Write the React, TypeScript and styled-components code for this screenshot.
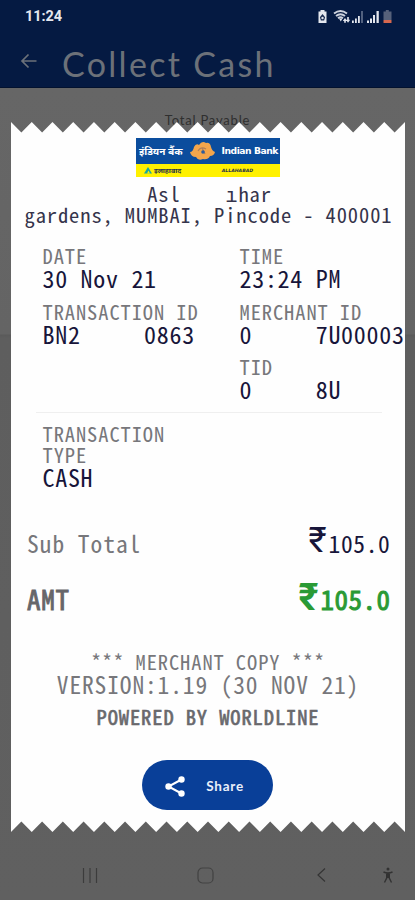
import React from "react";
import styled, { createGlobalStyle } from "styled-components";

const Global = createGlobalStyle`
  *{box-sizing:border-box}
  html,body{margin:0;padding:0;background:#606060}
  body{width:415px;height:900px;overflow:hidden}
`;

const mono = `"Noto Sans Mono CJK SC","Liberation Mono",monospace`;

const TEETH = 19;
const PAPER_W = 394;
const PAPER_H = 710;
const zigzag = (() => {
  const step = PAPER_W / TEETH;
  const pts: string[] = [];
  for (let i = 0; i <= TEETH; i++) {
    pts.push(`${(i * step).toFixed(2)}px 0px`);
    if (i < TEETH) pts.push(`${((i + 0.5) * step).toFixed(2)}px 10.5px`);
  }
  for (let i = TEETH; i >= 0; i--) {
    pts.push(`${(i * step).toFixed(2)}px ${PAPER_H}px`);
    if (i > 0) pts.push(`${((i - 0.5) * step).toFixed(2)}px ${PAPER_H - 10.5}px`);
  }
  return `polygon(${pts.join(",")})`;
})();

const Screen = styled.div`
  position: relative;
  width: 415px;
  height: 900px;
  overflow: hidden;
  display: flex;
  flex-direction: column;
  background: linear-gradient(#666 88px, #646464 334px, #5a5a5a 335px, #5e5e5e 338px, #606060 900px);
`;
const Header = styled.header`
  height: 88px;
  background: #051a42;
  border-bottom: 1px solid #03122f;
`;
const StatusBar = styled.div`
  height: 34px;
  padding: 0 22px 0 25px;
  display: flex;
  align-items: center;
  justify-content: space-between;
`;
const Clock = styled.span`
  font: 700 14.5px/16px Roboto, sans-serif;
  letter-spacing: -0.1px;
  color: #e4e7ee;
`;
const TitleBar = styled.div`
  height: 54px;
  padding: 3px 0 0 20px;
  display: flex;
  align-items: flex-start;
`;
const BackIcon = styled.svg`
  margin-top: 15px;
  margin-right: 24px;
`;
const Title = styled.h1`
  margin: 0;
  font: 400 34px/53px Lato, sans-serif;
  letter-spacing: 2.3px;
  color: #6c7179;
  white-space: nowrap;
`;
const Payable = styled.div`
  padding-top: 23px;
  text-align: center;
  font: 400 13px/18px Lato, sans-serif;
  letter-spacing: 0.8px;
  color: #2f2f2f;
`;
const NavBar = styled.nav`
  margin-top: auto;
  height: 50px;
  padding: 0 21px 0 82px;
  display: grid;
  grid-template-columns: 115px 120px 1fr auto;
  align-items: center;
`;
const Paper = styled.main`
  position: absolute;
  left: 11px;
  top: 122px;
  width: ${PAPER_W}px;
  height: ${PAPER_H}px;
  background: #fefefe;
  clip-path: ${zigzag};
  display: flex;
  flex-direction: column;
`;
const Logo = styled.div`
  margin: 16px auto 0 125px;
  width: 144px;
  height: 39px;
`;
const LogoBlue = styled.div`
  height: 26px;
  background: #0b4d9d;
  color: #fff;
  display: flex;
  align-items: center;
  padding: 0 2px 0 3px;
`;
const LogoHindi = styled.span`
  width: 50px;
  font: 700 10px/26px "Noto Sans", "Noto Sans Devanagari", sans-serif;
  white-space: nowrap;
`;
const LogoLatin = styled.span`
  margin-left: auto;
  font: 700 9.2px/26px "DejaVu Sans", sans-serif;
  letter-spacing: -0.45px;
  white-space: nowrap;
`;
const LogoYellow = styled.div`
  height: 13px;
  background: #fff100;
  color: #26324a;
  display: flex;
  align-items: center;
  padding: 0 27px 0 8px;
  font: italic 700 4.6px/13px "DejaVu Sans", sans-serif;
`;
const YellowHindi = styled.span`
  margin-left: 2px;
  font: 700 7px/13px "Noto Sans", sans-serif;
`;
const YellowLatin = styled.span`
  margin-left: auto;
`;

const Text = styled.div<{ $size: number; $pitch: number; $h: number; $color?: string; $stroke?: number }>`
  font-family: ${mono};
  font-size: ${(p) => p.$size}px;
  font-weight: 400;
  -webkit-text-stroke: ${(p) => p.$stroke || 0}px currentColor;
  line-height: ${(p) => p.$h}px;
  height: ${(p) => p.$h}px;
  letter-spacing: ${(p) => p.$pitch - p.$size / 2}px;
  color: ${(p) => p.$color || "#77777b"};
  white-space: pre;
`;
const Label = (p: { children: React.ReactNode }) => (
  <Text $size={20.5} $pitch={11.15} $h={21}>{p.children}</Text>
);
const Value = (p: { children: React.ReactNode }) => (
  <Text $size={24} $pitch={12.7} $h={24} $color="#17153a">{p.children}</Text>
);
const Address = styled.div`
  margin-top: 6px;
  padding-left: 13.5px;
`;
const Grid = styled.section`
  margin-top: 20px;
  padding-left: 31.5px;
  display: grid;
  grid-template-columns: 197px 1fr;
  row-gap: 10.5px;
`;
const Rule = styled.hr`
  width: 346px;
  height: 1px;
  margin: 11px 0 0 25px;
  border: 0;
  background: #efefef;
`;
const TypeBlock = styled.section`
  padding: 10px 0 0 31.5px;
`;
const Row = styled.div<{ $top: number }>`
  margin-top: ${(p) => p.$top}px;
  padding: 0 14.5px 0 16px;
  height: 34px;
  display: flex;
  align-items: center;
  justify-content: space-between;
`;
const Price = styled.div<{ $color: string }>`
  display: flex;
  align-items: center;
  color: ${(p) => p.$color};
`;
const Rupee = styled.span<{ $bold?: boolean }>`
  font-family: Roboto, sans-serif;
  font-weight: ${(p) => (p.$bold ? 700 : 400)};
  font-size: ${(p) => (p.$bold ? 38 : 35)}px;
  line-height: 30px;
  margin: 0 2px 4px 0;
`;
const Footer = styled.footer`
  margin-top: 35px;
  display: flex;
  flex-direction: column;
  align-items: center;
`;
const Powered = styled.div`
  margin-top: 10px;
`;
const Share = styled.button`
  margin: 33px 0 0 131px;
  width: 131px;
  height: 50px;
  border: 0;
  border-radius: 25px;
  background: #093f98;
  color: #e9effa;
  padding: 2px 29px 0 23px;
  display: flex;
  align-items: center;
  justify-content: space-between;
  font: 700 13.5px/20px Lato, sans-serif;
  letter-spacing: 0.8px;
`;

const StatusIcons = () => (
  <svg width="76" height="16" viewBox="317 9 76 16" fill="#e4e7ee">
    <path d="M318.5 11.5h2v-1.5h4v1.5h2V23h-8z" />
    <path d="M322.5 14l2.6 3.2-1 3.3h-3.2l-1-3.3z" fill="#1a2c50" />
    <circle cx="322.5" cy="18" r="1.2" />
    <g fill="none" stroke="#cdd2dd" strokeWidth="1.9">
      <path d="M334 13.5q6.5-5 13 0M336 16q4.500-3.500 9 0M338 18.300q2.500-2 5 0" />
    </g>
    <path d="M339 18.500h3.500l-1.700 3z" />
    <path d="M345 18l-2.200 3h1.400v1.700h1.600V21h1.200zM348 22.700l2.200-3h-1.400V17h-1.600v2.700h-1.200z" />
    <path d="M352 20.500h1.800V23H352zM355 18.500h1.800V23H355zM358 16h1.800v7H358z" />
    <path d="M361 11h2v12h-2z" fill="#52617f" />
    <path d="M367 20.500h2V23h-2zM370 18.500h2V23h-2zM373 15h2v8h-2zM376.500 11h2.300v12h-2.300z" />
    <path d="M383.500 11.500h2.300V10h3v1.500h2.700V20h-8z" fill="#56617a" />
    <path d="M383.500 20h8v3h-8z" fill="#d7684f" />
  </svg>
);

const BankEmblem = () => (
  <svg width="27" height="20" viewBox="0 0 27 20">
    <path d="M1 11q3 0 4-5 2-4 5-2 3-5 7-2 4-1 5 4 1 4 4 5-1 4-5 4-2 4-7 3-5 2-7-2-5 0-6-5z" fill="#f3a64c" />
    <path d="M9 10q3-5 8-2M13 7l3 6" fill="none" stroke="#b07f58" strokeWidth="1.200" />
    <circle cx="14" cy="11" r="1.800" fill="#2d5c9b" />
  </svg>
);

export default function App() {
  return (
    <Screen>
      <Global />
      <Header>
        <StatusBar>
          <Clock>11:24</Clock>
          <StatusIcons />
        </StatusBar>
        <TitleBar>
          <BackIcon width="18" height="18" viewBox="0 0 18 18" fill="none" stroke="#6c7179" strokeWidth="1.700">
            <path d="M16.500 9H2M8.500 2.500L2 9l6.500 6.500" />
          </BackIcon>
          <Title>Collect Cash</Title>
        </TitleBar>
      </Header>
      <Payable>Total Payable</Payable>

      <Paper>
        <Logo>
          <LogoBlue>
            <LogoHindi>इंडियन बैंक</LogoHindi>
            <BankEmblem />
            <LogoLatin>Indian Bank</LogoLatin>
          </LogoBlue>
          <LogoYellow>
            <svg width="8" height="7" viewBox="0 0 8 7"><path d="M0 6.500L4 0l4 6.500z" fill="#15a8a0" /><path d="M3 6.500L4.500 3.500l1.500 3z" fill="#fff100" /></svg>
            <YellowHindi>इलाहाबाद</YellowHindi>
            <YellowLatin>ALLAHABAD</YellowLatin>
          </LogoYellow>
        </Logo>
        <Address>
          <Text $size={20.5} $pitch={11.15} $h={21} $color="#35344b">{"           Asl    ıhar"}</Text>
          <Text $size={20.5} $pitch={11.15} $h={21} $color="#35344b">gardens, MUMBAI, Pincode - 400001</Text>
        </Address>
        <Grid>
          <div><Label>DATE</Label><Value>30 Nov 21</Value></div>
          <div><Label>TIME</Label><Value>23:24 PM</Value></div>
          <div><Label>TRANSACTION ID</Label><Value>{"BN2     0863"}</Value></div>
          <div><Label>MERCHANT ID</Label><Value>{"0     7U00003"}</Value></div>
          <div />
          <div><Label>TID</Label><Value>{"0     8U"}</Value></div>
        </Grid>
        <Rule />
        <TypeBlock>
          <Label>TRANSACTION</Label>
          <Label>TYPE</Label>
          <Value>CASH</Value>
        </TypeBlock>
        <Row $top={37}>
          <Text $size={23.5} $pitch={12.7} $h={30}>Sub Total</Text>
          <Price $color="#17153a">
            <Rupee>₹</Rupee>
            <Text $size={23.5} $pitch={12.4} $h={30} $color="inherit">105.0</Text>
          </Price>
        </Row>
        <Row $top={22}>
          <Text $size={27} $pitch={14.2} $h={34} $color="#66666a" $stroke={0.9}>AMT</Text>
          <Price $color="#2a9a35">
            <Rupee $bold>₹</Rupee>
            <Text $size={27} $pitch={14} $h={34} $color="inherit" $stroke={0.9}>105.0</Text>
          </Price>
        </Row>
        <Footer>
          <Text $size={20.5} $pitch={11.15} $h={21}>*** MERCHANT COPY ***</Text>
          <Text $size={23.5} $pitch={12.6} $h={24}>VERSION:1.19 (30 NOV 21)</Text>
          <Powered><Text $size={20.5} $pitch={11.15} $h={21} $color="#68686c" $stroke={0.6}>POWERED BY WORLDLINE</Text></Powered>
        </Footer>
        <Share>
          <svg width="20" height="21" viewBox="0 0 20 21" fill="#fff">
            <path d="M16.500 3.500L3.500 10.500l13 7" fill="none" stroke="#fff" strokeWidth="2" />
            <circle cx="16.500" cy="3.500" r="3.200" /><circle cx="3.500" cy="10.500" r="3.200" /><circle cx="16.500" cy="17.500" r="3.200" />
          </svg>
          Share
        </Share>
      </Paper>

      <NavBar>
        <svg width="16" height="15" viewBox="0 0 16 15" stroke="#3c3c3c" strokeWidth="1.200"><path d="M1.500 0v15M8 0v15M14.500 0v15" /></svg>
        <svg width="17" height="17" viewBox="0 0 17 17" fill="none" stroke="#424242" strokeWidth="1.200"><rect x="1" y="1" width="15" height="15" rx="4.500" /></svg>
        <svg width="9" height="16" viewBox="0 0 9 16" fill="none" stroke="#343434" strokeWidth="1.200"><path d="M8 1.500L1 8l7 6.500" /></svg>
        <svg width="12" height="17" viewBox="0 0 12 17" fill="none" stroke="#323232" strokeWidth="1.400"><circle cx="6" cy="2" r="0.800" fill="#323232" /><path d="M1.500 5q4.500 2 9 0M6 6v5M4.700 6v5L2.500 15.500M7.300 6v5l2.200 4.500" /></svg>
      </NavBar>
    </Screen>
  );
}
